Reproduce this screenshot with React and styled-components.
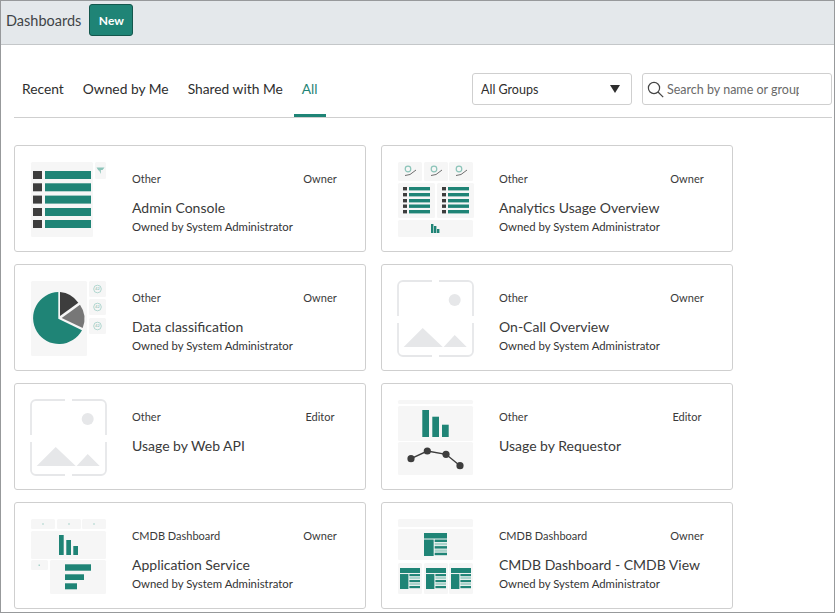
import React from 'react';
import styled, { createGlobalStyle } from 'styled-components';

const TEAL = '#1f8476';
const TILE = '#f6f6f6';
const DARK = '#3d3d3d';
const SOFT = '#a9d3cb';
const PLACEHOLDER = '#e6e7e9';

const GlobalStyle = createGlobalStyle`
    html, body {
        margin: 0;
        padding: 0;
        background: #ffffff;
    }
    body {
        font-family: "Lato", "Noto Sans", sans-serif;
        color: #2e2e2e;
    }
`;

const Frame = styled.div`
    box-sizing: border-box;
    width: 835px;
    height: 613px;
    border: 1px solid #97999b;
    overflow: hidden;
    background: #ffffff;
`;

const TopBar = styled.header`
    display: flex;
    align-items: center;
    gap: 8px;
    box-sizing: border-box;
    height: 44px;
    padding: 0 0 5px 5px;
    background: #e4e8eb;
    border-bottom: 1px solid #c4c7c9;
`;

const PageTitle = styled.h1`
    margin: 0;
    font-size: 14.5px;
    font-weight: 400;
    color: #3f4447;
`;

const NewButton = styled.button`
    width: 44px;
    height: 32px;
    padding: 0;
    background: ${TEAL};
    border: 1px solid #14574d;
    border-radius: 3px;
    color: #ffffff;
    font-family: inherit;
    font-size: 12px;
    font-weight: 700;
`;

const Content = styled.main`
    padding: 28px 0 0 13px;
`;

const Toolbar = styled.div`
    display: flex;
    justify-content: space-between;
    align-items: flex-start;
    height: 44px;
    border-bottom: 1px solid #cfcfcf;
    margin-right: 2px;
`;

const Tabs = styled.nav`
    display: flex;
    gap: 3px;
`;

const Tab = styled.a`
    box-sizing: border-box;
    height: 44px;
    padding: 0 8px;
    line-height: 32px;
    font-size: 13.8px;
    color: ${props => props.$active ? TEAL : '#2e2e2e'};
    border-bottom: 3px solid ${props => props.$active ? TEAL : 'transparent'};
`;

const Filters = styled.div`
    display: flex;
    gap: 10px;
`;

const GroupSelect = styled.div`
    display: flex;
    align-items: center;
    justify-content: space-between;
    box-sizing: border-box;
    width: 160px;
    height: 32px;
    padding: 0 11px 0 8px;
    border: 1px solid #cfcfcf;
    border-radius: 3px;
    font-size: 12.5px;
`;

const Caret = styled.span`
    width: 0;
    height: 0;
    border-left: 5px solid transparent;
    border-right: 5px solid transparent;
    border-top: 8px solid #2e2e2e;
`;

const SearchBox = styled.label`
    display: flex;
    align-items: center;
    gap: 3px;
    box-sizing: border-box;
    width: 190px;
    height: 32px;
    padding: 0 0 0 4px;
    border: 1px solid #cfcfcf;
    border-radius: 3px;
`;

const SearchInput = styled.input`
    width: 132px;
    padding: 0;
    border: 0;
    outline: 0;
    background: transparent;
    font-family: inherit;
    font-size: 12.5px;
    &::placeholder {
        color: #6a6a6a;
        opacity: 1;
    }
`;

const CardGrid = styled.section`
    display: grid;
    grid-template-columns: 352px 352px;
    grid-auto-rows: 107px;
    column-gap: 15px;
    row-gap: 12px;
    padding-top: 27px;
`;

const Card = styled.article`
    display: flex;
    box-sizing: border-box;
    padding: 15px 0 0 15px;
    border: 1px solid #cfcfcf;
    border-radius: 3px;
`;

const ThumbSvg = styled.svg`
    flex: none;
    width: 80px;
    height: 80px;
`;

const CardBody = styled.div`
    display: flex;
    flex-direction: column;
    flex: 1;
    padding: 10px 0 0 22px;
`;

const MetaRow = styled.div`
    display: flex;
    justify-content: space-between;
    font-size: 11px;
    line-height: 16px;
    color: #3a3a3a;
`;

const Role = styled.span`
    width: 40px;
    margin-right: 25px;
    text-align: center;
`;

const CardTitle = styled.h2`
    margin: 11px 0 0;
    font-size: 14px;
    line-height: 20px;
    font-weight: 400;
    color: #3a3a3a;
`;

const CardOwner = styled.p`
    margin: 1px 0 0;
    font-size: 11.35px;
    line-height: 16px;
    color: #333333;
`;

const Tile = ({ x, y, w, h }) => <rect x={x} y={y} width={w} height={h} rx="1.5" fill={TILE} />;

const Bars = ({ items }) => items.map(([x, y, w, h, fill = TEAL], i) => (
    <rect key={i} x={x} y={y} width={w} height={h} fill={fill} />
));

const rowsAt = (ys, sqX, sqW, barX, barW, h) => ys.flatMap(y => [
    [sqX, y, sqW, h, DARK],
    [barX, y, barW, h, TEAL],
]);

const MiniTable = ({ x, y, w, h }) => {
    const head = h * 0.24;
    const left = w * 0.42;
    const top = y + head + 1;
    const rows = 5;
    const rowH = (y + h - top) / rows;
    return <g>
        <rect x={x} y={y} width={w} height={head} fill={TEAL} />
        <rect x={x} y={top} width={left} height={y + h - top} fill={TEAL} />
        {Array.from({ length: rows }, (_, i) => (
            <rect key={i} x={x + left + 1} y={top + i * rowH} width={w - left - 1} height={rowH - 0.8} fill={i % 2 ? SOFT : TEAL} />
        ))}
    </g>;
};

const Pen = ({ x }) => <g>
    <circle cx={x + 10} cy="8" r="2.8" fill="none" stroke="#8cc4b9" strokeWidth="1.2" />
    <path d={`M${x + 7} 14.5 L${x + 12} 13.5 L${x + 18} 9`} fill="none" stroke="#6e6e6e" strokeWidth="1" />
</g>;

const ConsoleThumb = () => <>
    <Tile x="1" y="1" w="62" h="75" />
    <Tile x="65" y="1" w="11" h="17" />
    <path d="M66.5 6.5 H74.5 L72.5 9 H70.8 V13 L69.2 9.5 H68.5 Z" fill="#8cc4b9" />
    <Bars items={rowsAt([10, 22.3, 34.6, 47, 59], 3, 9, 15, 46, 8)} />
</>;

const UsageThumb = () => <>
    <Tile x="1" y="1" w="24" h="19" />
    <Tile x="27" y="1" w="24" h="19" />
    <Tile x="52" y="1" w="24" h="19" />
    <Tile x="1" y="22" w="37" h="35" />
    <Tile x="40" y="22" w="37" h="35" />
    <Tile x="1" y="59" w="75" h="17" />
    <Pen x={1} />
    <Pen x={27} />
    <Pen x={52} />
    <Bars items={rowsAt([26, 32, 38, 43.5, 49], 6, 4, 12, 21, 3.4)} />
    <Bars items={rowsAt([26, 32, 38, 43.5, 49], 45, 4, 51, 21, 3.4)} />
    <Bars items={[[34, 63, 2.4, 9], [37, 65, 2.4, 7], [40, 68, 2.4, 4]]} />
</>;

const Badge42 = ({ y }) => <g>
    <rect x="59" y={y} width="17" height="16" rx="1.5" fill={TILE} />
    <circle cx="67.5" cy={y + 8} r="3.8" fill="none" stroke={SOFT} strokeWidth="0.9" />
    <text x="67.5" y={y + 9.4} fontSize="3.8" textAnchor="middle" fill="#7fb8ad">42</text>
</g>;

const PieThumb = () => <>
    <Tile x="1" y="1" w="56" h="75" />
    <Badge42 y={1} />
    <Badge42 y={19} />
    <Badge42 y={38} />
    <path d="M28.3 38.7 L28.3 12 A26 26 0 1 0 52 50.3 Z" fill={TEAL} />
    <path d="M30 36 L30 12 A25 25 0 0 1 48.3 22.7 Z" fill={DARK} />
    <path d="M31.7 38 L50 24.7 A25 25 0 0 1 52.7 48 Z" fill="#777777" />
</>;

const PlaceholderThumb = () => <>
    <path
        d="M35 1 H6 A5 5 0 0 0 1 6 V36 M42 1 H71 A5 5 0 0 1 76 6 V36 M1 43 V71 A5 5 0 0 0 6 76 H35 M76 43 V71 A5 5 0 0 1 71 76 H42"
        fill="none"
        stroke={PLACEHOLDER}
        strokeWidth="1.8"
    />
    <circle cx="57.7" cy="20" r="6" fill={PLACEHOLDER} />
    <path d="M6.7 67 L25.7 48 L45.7 67 Z M46.7 67 L57.7 55 L69.7 67 Z" fill={PLACEHOLDER} />
</>;

const RequestorThumb = () => <>
    <Tile x="1" y="1" w="75" h="4" />
    <Tile x="1" y="7" w="75" h="35" />
    <Tile x="1" y="43" w="75" h="33" />
    <Bars items={[[25.3, 11, 6.7, 27], [35.3, 17.7, 6.7, 20.3], [45, 25.7, 6.7, 12.3]]} />
    <polyline points="14,59.7 30.3,52 49,55.3 63,66.7" fill="none" stroke={DARK} strokeWidth="1.4" />
    {[[14, 59.7], [30.3, 52], [49, 55.3], [63, 66.7]].map(([cx, cy]) => (
        <circle key={cx} cx={cx} cy={cy} r="3.6" fill={DARK} />
    ))}
</>;

const ServiceThumb = () => <>
    <Tile x="1" y="1" w="24" h="10" />
    <Tile x="27" y="1" w="24" h="10" />
    <Tile x="52" y="1" w="24" h="10" />
    <Tile x="1" y="13" w="75" h="28" />
    <Tile x="1" y="42" w="17" h="10" />
    <Tile x="20" y="42" w="56" h="34" />
    <Bars items={[
        [12, 5.5, 2, 1, SOFT], [38, 5.5, 2, 1, SOFT], [63, 5.5, 2, 1, SOFT], [8.5, 46.5, 1.5, 1.5, SOFT],
        [29, 17, 4.7, 20], [36.3, 22, 4.7, 15], [43.3, 28, 4.7, 9],
        [35, 46.3, 26, 6.4], [35, 56.3, 19, 5.7], [35, 65.3, 12, 6],
    ]} />
</>;

const CmdbThumb = () => <>
    <Tile x="1" y="1" w="75" h="8" />
    <Tile x="1" y="11" w="75" h="31" />
    <Tile x="1" y="45" w="24" h="31" />
    <Tile x="27" y="45" w="24" h="31" />
    <Tile x="52" y="45" w="24" h="31" />
    <MiniTable x={27} y={15} w={23} h={23} />
    <MiniTable x={3} y={50} w={20} h={21} />
    <MiniTable x={29} y={50} w={20} h={21} />
    <MiniTable x={54} y={50} w={20} h={21} />
</>;

const dashboards = [
    { thumb: ConsoleThumb, group: 'Other', role: 'Owner', title: 'Admin Console', owner: 'Owned by System Administrator' },
    { thumb: UsageThumb, group: 'Other', role: 'Owner', title: 'Analytics Usage Overview', owner: 'Owned by System Administrator' },
    { thumb: PieThumb, group: 'Other', role: 'Owner', title: 'Data classification', owner: 'Owned by System Administrator' },
    { thumb: PlaceholderThumb, group: 'Other', role: 'Owner', title: 'On-Call Overview', owner: 'Owned by System Administrator' },
    { thumb: PlaceholderThumb, group: 'Other', role: 'Editor', title: 'Usage by Web API' },
    { thumb: RequestorThumb, group: 'Other', role: 'Editor', title: 'Usage by Requestor' },
    { thumb: ServiceThumb, group: 'CMDB Dashboard', role: 'Owner', title: 'Application Service', owner: 'Owned by System Administrator' },
    { thumb: CmdbThumb, group: 'CMDB Dashboard', role: 'Owner', title: 'CMDB Dashboard - CMDB View', owner: 'Owned by System Administrator' },
];

const tabs = ['Recent', 'Owned by Me', 'Shared with Me', 'All'];

const DashboardCard = ({ thumb: Thumb, group, role, title, owner }) => {
    return <Card>
        <ThumbSvg viewBox="0 0 80 80">
            <Thumb />
        </ThumbSvg>
        <CardBody>
            <MetaRow>
                <span>{group}</span>
                <Role>{role}</Role>
            </MetaRow>
            <CardTitle>{title}</CardTitle>
            {owner && <CardOwner>{owner}</CardOwner>}
        </CardBody>
    </Card>;
};

const App = () => {
    return <Frame>
        <GlobalStyle />
        <TopBar>
            <PageTitle>Dashboards</PageTitle>
            <NewButton>New</NewButton>
        </TopBar>
        <Content>
            <Toolbar>
                <Tabs>
                    {tabs.map(tab => <Tab key={tab} $active={tab === 'All'}>{tab}</Tab>)}
                </Tabs>
                <Filters>
                    <GroupSelect>
                        All Groups
                        <Caret />
                    </GroupSelect>
                    <SearchBox>
                        <svg width="17" height="17" viewBox="0 0 17 17" fill="none" stroke="#444444" strokeWidth="1.2">
                            <circle cx="7" cy="7" r="5.6" />
                            <path d="M11 11 L16.2 16.2" />
                        </svg>
                        <SearchInput placeholder="Search by name or group" />
                    </SearchBox>
                </Filters>
            </Toolbar>
            <CardGrid>
                {dashboards.map(item => <DashboardCard key={item.title} {...item} />)}
            </CardGrid>
        </Content>
    </Frame>;
};

export default App;
